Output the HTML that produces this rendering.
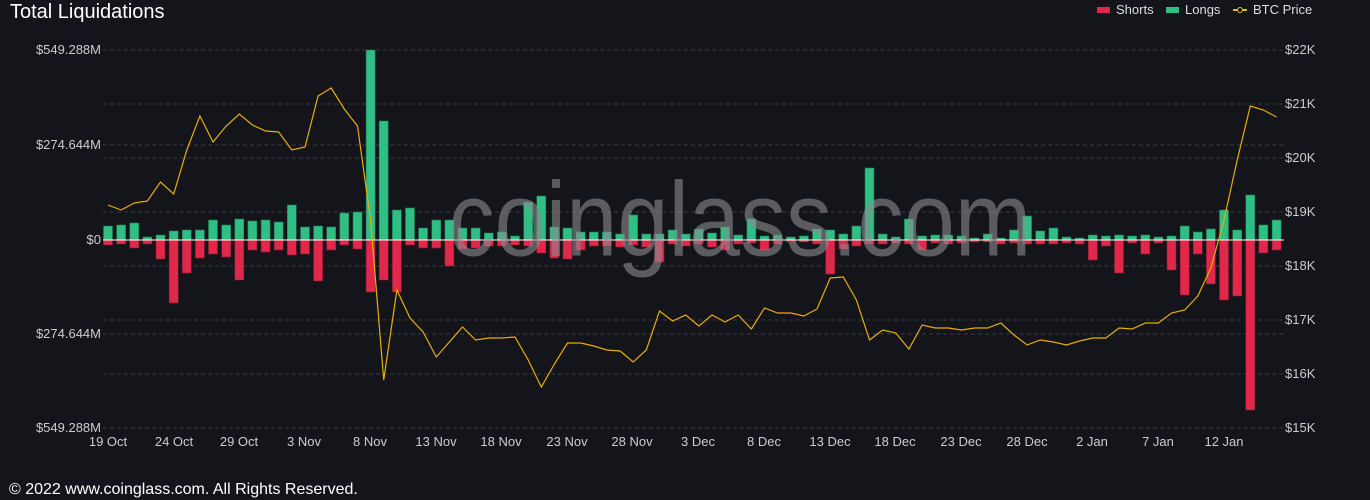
<!DOCTYPE html>
<html><head><meta charset="utf-8"><style>
html,body{margin:0;padding:0;background:#14151a;width:1370px;height:500px;overflow:hidden;font-family:"Liberation Sans",sans-serif}
</style></head><body>
<svg id="s" width="1370" height="500" xmlns="http://www.w3.org/2000/svg" style="position:absolute;left:0;top:0">
<text x="10" y="18" fill="#fff" font-size="20">Total Liquidations</text>
<g transform="translate(-5,0)">
<rect x="1102" y="7" width="13" height="6" fill="#e0294a"/><text x="1121" y="14" fill="#ddd" font-size="13">Shorts</text>
<rect x="1171" y="7" width="13" height="6" fill="#2fbf85"/><text x="1190" y="14" fill="#ddd" font-size="13">Longs</text>
<line x1="1238" y1="10" x2="1252" y2="10" stroke="#f0b90b" stroke-width="2"/><circle cx="1245" cy="10" r="2.5" fill="#14151a" stroke="#f0b90b"/><text x="1258" y="14" fill="#ddd" font-size="13">BTC Price</text>
</g>
<g stroke="#3a3b40" stroke-dasharray="4,3" stroke-width="1">
<line x1="103" y1="50" x2="1284" y2="50"/><line x1="103" y1="104" x2="1284" y2="104"/><line x1="103" y1="145" x2="1284" y2="145"/><line x1="103" y1="158" x2="1284" y2="158"/><line x1="103" y1="212" x2="1284" y2="212"/><line x1="103" y1="266" x2="1284" y2="266"/><line x1="103" y1="320" x2="1284" y2="320"/><line x1="103" y1="334" x2="1284" y2="334"/><line x1="103" y1="374" x2="1284" y2="374"/><line x1="103" y1="428" x2="1284" y2="428"/>
</g>
<g fill="#ccc" font-size="13" text-anchor="end">
<text x="101" y="54">$549.288M</text><text x="101" y="149">$274.644M</text><text x="101" y="244">$0</text><text x="101" y="338">$274.644M</text><text x="101" y="432">$549.288M</text>
</g>
<g fill="#ccc" font-size="13">
<text x="1285" y="54">$22K</text><text x="1285" y="108">$21K</text><text x="1285" y="162">$20K</text><text x="1285" y="216">$19K</text><text x="1285" y="270">$18K</text><text x="1285" y="324">$17K</text><text x="1285" y="378">$16K</text><text x="1285" y="432">$15K</text>
</g>
<g fill="#ccc" font-size="13" text-anchor="middle">
<text x="108" y="446">19 Oct</text><text x="174" y="446">24 Oct</text><text x="239" y="446">29 Oct</text><text x="304" y="446">3 Nov</text><text x="370" y="446">8 Nov</text><text x="436" y="446">13 Nov</text><text x="501" y="446">18 Nov</text><text x="567" y="446">23 Nov</text><text x="632" y="446">28 Nov</text><text x="698" y="446">3 Dec</text><text x="764" y="446">8 Dec</text><text x="830" y="446">13 Dec</text><text x="895" y="446">18 Dec</text><text x="961" y="446">23 Dec</text><text x="1027" y="446">28 Dec</text><text x="1092" y="446">2 Jan</text><text x="1158" y="446">7 Jan</text><text x="1224" y="446">12 Jan</text>
</g>
<g id="bars"></g>
<line x1="103" y1="240" x2="1284" y2="240" stroke="#fff" stroke-width="1"/>
<polyline id="pl" fill="none" stroke="#e6ad09" stroke-width="1.2"/>
<text x="740" y="236" fill="#8a8a90" fill-opacity="0.6" font-size="92" text-anchor="middle" transform="translate(0,-16) scale(1,1.15)">coinglass.com</text>
<text x="9" y="494" fill="#fff" font-size="16">© 2022 www.coinglass.com. All Rights Reserved.</text>
</svg>
<script>
var L=[226,225,223,237,235,231,230,230,220,225,219,221,220,222,205,227,226,227,213,212,50,121,210,208,228,220,220,228,228,233,232,236,202,196,227,228,232,232,232,234,215,234,234,230,234,229,233,227,235,219,236,235,237,236,229,230,234,226,168,234,237,219,236,235,235,236,238,234,238,230,216,231,228,237,238,235,236,235,236,235,237,236,226,232,229,210,230,195,225,220];
var S=[245,244,248,244,259,303,273,258,254,257,280,250,252,250,255,254,281,250,245,249,292,280,292,245,248,248,266,249,248,246,246,245,246,253,258,259,250,246,246,247,245,247,262,244,246,244,247,250,244,243,250,244,242,242,244,274,249,246,244,244,243,244,250,243,244,243,242,242,244,243,244,244,244,243,244,260,246,273,243,254,243,270,295,254,284,300,296,410,253,250];
var P=[205,210,203,201,182,194,150,116,142,126,114,125,131,132,150,147,96,88,109,126,220,380,290,318,332,357,342,327,340,338,338,337,360,387,364,343,343,346,350,351,362,350,311,321,315,326,315,322,315,329,308,313,313,316,309,278,277,300,340,330,333,349,325,328,328,330,328,328,323,335,345,340,342,345,341,338,338,328,329,323,323,313,310,296,268,220,160,106,110,117];
var g=document.getElementById('bars'),h='',pts=[];
for(var i=0;i<90;i++){var x=108+i*13.13;
h+='<rect x="'+(x-4.5).toFixed(1)+'" y="'+L[i]+'" width="9" height="'+(240-L[i])+'" fill="#2fbf85" stroke="#1f7a56" stroke-width="0.6"/>';
h+='<rect x="'+(x-4.5).toFixed(1)+'" y="240" width="9" height="'+(S[i]-240)+'" fill="#e0294a" stroke="#8a1c30" stroke-width="0.6"/>';
pts.push(x.toFixed(1)+','+P[i]);}
g.innerHTML=h;document.getElementById('pl').setAttribute('points',pts.join(' '));
</script>
</body></html>
